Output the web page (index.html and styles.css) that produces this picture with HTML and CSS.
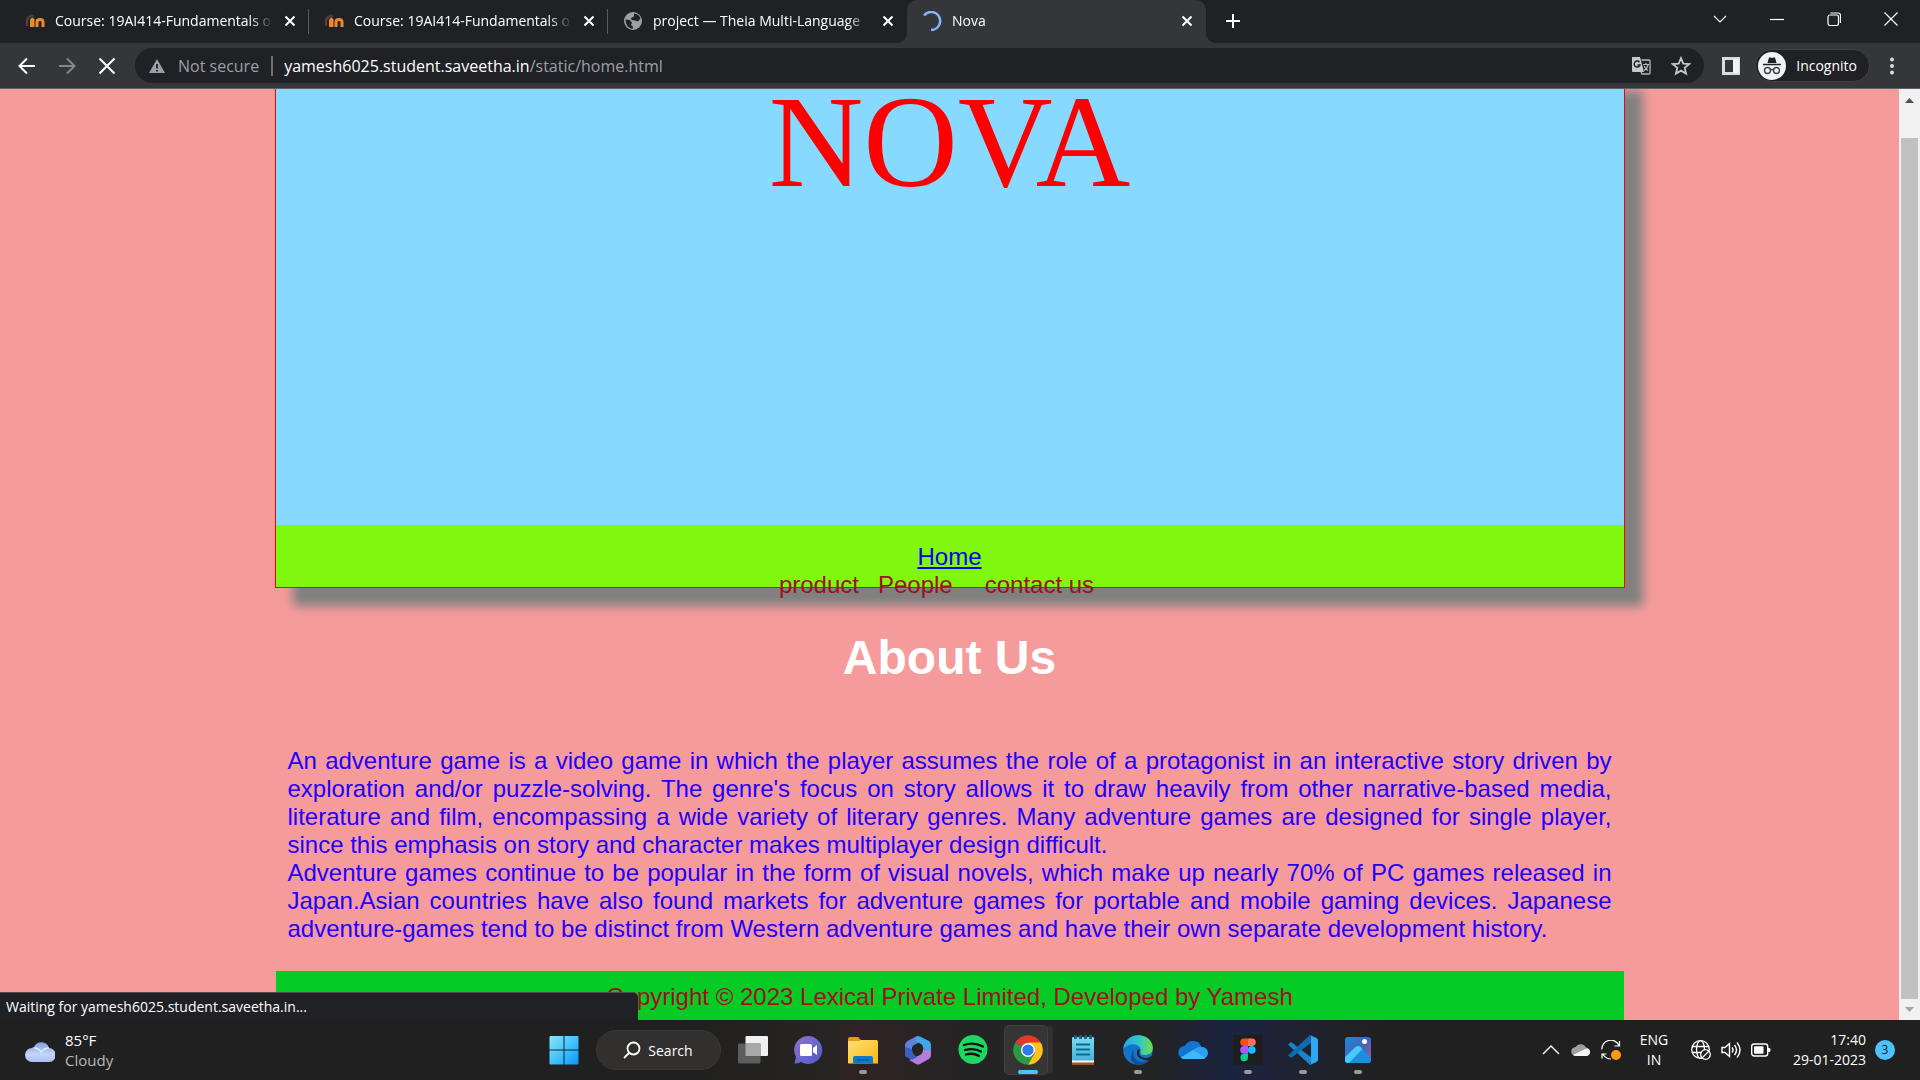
FILE: index.html
```html
<!DOCTYPE html>
<html lang="en">
<head>
<meta charset="utf-8">
<title>Nova</title>
<link rel="stylesheet" href="styles.css">
</head>
<body>
<header class="browser">
  <div class="tabstrip">
    <div class="tab">
      <svg class="favicon" viewBox="0 0 20 20"><path d="M2 15V9.500q0-2.500 2.500-2.500" fill="none" stroke="#5b4334" stroke-width="2"/><path d="M1 6l6-3 3 2-5 2z" fill="#3f3f41"/><path d="M6.500 16V9.500M6.500 10q0-2 2-2M12 16v-5q0-2.500 3-2.500t3 2.500v5M8 8v8" fill="none" stroke="#ef8a2b" stroke-width="3"/></svg>
      <a class="tab-title" href="#">Course: 19AI414-Fundamentals o</a>
      <button class="tab-close" aria-label="Close tab"><svg viewBox="0 0 12 12"><path d="M1.500 1.500l9 9M10.500 1.500l-9 9"/></svg></button>
    </div>
    <div class="tab">
      <svg class="favicon" viewBox="0 0 20 20"><path d="M2 15V9.500q0-2.500 2.500-2.500" fill="none" stroke="#5b4334" stroke-width="2"/><path d="M1 6l6-3 3 2-5 2z" fill="#3f3f41"/><path d="M6.500 16V9.500M6.500 10q0-2 2-2M12 16v-5q0-2.500 3-2.500t3 2.500v5M8 8v8" fill="none" stroke="#ef8a2b" stroke-width="3"/></svg>
      <a class="tab-title" href="#">Course: 19AI414-Fundamentals o</a>
      <button class="tab-close" aria-label="Close tab"><svg viewBox="0 0 12 12"><path d="M1.500 1.500l9 9M10.500 1.500l-9 9"/></svg></button>
    </div>
    <div class="tab tab-last">
      <svg class="favicon" viewBox="0 0 20 20"><circle cx="10" cy="10" r="9" fill="#9aa0a6"/><path d="M2.500 8.500l4 .5 2.500 2.500-1 2.500 2 1.500-.5 2.500q-7-1.500-7-9.500zM11 2.500q5 .5 6.500 5l-2.500 3-3-1-3.500-.5L8 7l3-1.500z" fill="#202124"/></svg>
      <a class="tab-title" href="#">project — Theia Multi-Language</a>
      <button class="tab-close" aria-label="Close tab"><svg viewBox="0 0 12 12"><path d="M1.500 1.500l9 9M10.500 1.500l-9 9"/></svg></button>
    </div>
    <div class="tab tab-active">
      <svg class="favicon" viewBox="0 0 20 20"><path d="M2 4.500A9 9 0 1 1 9 19" fill="none" stroke="#8ab4f8" stroke-width="2.500"/></svg>
      <a class="tab-title" href="#">Nova</a>
      <button class="tab-close" aria-label="Close tab"><svg viewBox="0 0 12 12"><path d="M1.500 1.500l9 9M10.500 1.500l-9 9"/></svg></button>
    </div>
    <button class="new-tab" aria-label="New tab"><svg viewBox="0 0 16 16"><path d="M8 1v14M1 8h14"/></svg></button>
    <div class="window-controls">
      <button aria-label="Search tabs"><svg viewBox="0 0 14 14"><path d="M1 4l6 6 6-6"/></svg></button>
      <button aria-label="Minimise"><svg viewBox="0 0 14 14"><path d="M0 7.500h14"/></svg></button>
      <button aria-label="Restore"><svg viewBox="0 0 14 14"><rect x="1" y="3" width="10.500" height="10.500" rx="2"/><path d="M3.500 1H11q2.500 0 2.500 2.500V11"/></svg></button>
      <button aria-label="Close"><svg viewBox="0 0 14 14"><path d="M.5.5l13 13M13.500.5l-13 13"/></svg></button>
    </div>
  </div>
  <div class="toolbar">
    <button class="tool" aria-label="Back"><svg viewBox="0 0 20 20"><path d="M18 10H3M10 2.500L2.500 10l7.500 7.500"/></svg></button>
    <button class="tool tool-off" aria-label="Forward"><svg viewBox="0 0 20 20"><path d="M2 10h15M10 2.500l7.500 7.500-7.500 7.500"/></svg></button>
    <button class="tool" aria-label="Stop"><svg viewBox="0 0 20 20"><path d="M2.500 2.500l15 15M17.500 2.500l-15 15"/></svg></button>
    <div class="omnibox">
      <svg class="warn" viewBox="0 0 16 16"><path d="M8 1l8 14H0z" fill="#9aa0a6"/><path d="M8 6v4.500M8 12v1.500" stroke="#202124" stroke-width="1.800"/></svg>
      <span class="security">Not secure</span>
      <span class="url"><b>yamesh6025.student.saveetha.in</b>/static/home.html</span>
      <button class="omni-button" aria-label="Translate"><svg viewBox="0 0 20 20"><path d="M1 1h8l4 15H2q-1 0-1-1z" fill="#c4c7cb"/><path d="M10.500 4H18q1 0 1 1v12q0 1-1 1h-7l-1-2" fill="none" stroke="#b5b8bc" stroke-width="1.300"/><path d="M8.500 6.200A3 3 0 1 0 9 9H6.500" fill="none" stroke="#202124" stroke-width="1.500"/><path d="M12 8.500h6M15 7v1.500M17 9q-1 4-4 5.500M13 10q1.500 3 4 4.500" fill="none" stroke="#b5b8bc" stroke-width="1.200"/></svg></button>
      <button class="omni-button" aria-label="Bookmark"><svg viewBox="0 0 20 20"><path d="M10 2.200l2.300 5.400 5.900.5-4.500 3.800 1.400 5.700-5.100-3-5.100 3 1.400-5.700L1.800 8.100l5.900-.5z" fill="none" stroke="#c4c7cb" stroke-width="1.800"/></svg></button>
    </div>
    <button class="side-panel" aria-label="Side panel"><svg viewBox="0 0 18 18"><path d="M1.500 1.500h15v15h-15z" fill="none" stroke="#dadce0" stroke-width="3"/><path d="M11 2h6v14h-6z" fill="#f1f3f4"/></svg></button>
    <button class="incognito"><svg viewBox="0 0 28 28"><circle cx="14" cy="14" r="14" fill="#f1f3f4"/><path d="M9.500 11l1.500-5.500h2l1 .7 1-.7h2L18.500 11z" fill="#202124"/><path d="M5 12.500h18" stroke="#202124" stroke-width="1.500"/><circle cx="9.500" cy="18.500" r="3" fill="none" stroke="#3c4043" stroke-width="1.400"/><circle cx="18.500" cy="18.500" r="3" fill="none" stroke="#3c4043" stroke-width="1.400"/><path d="M12.500 18q1.500-1 3 0" fill="none" stroke="#3c4043" stroke-width="1.400"/></svg>Incognito</button>
    <button class="menu" aria-label="Menu"><svg viewBox="0 0 4 18"><circle cx="2" cy="2.500" r="2"/><circle cx="2" cy="9" r="2"/><circle cx="2" cy="15.500" r="2"/></svg></button>
  </div>
</header>

<div class="viewport">
  <main class="page">
    <div class="container">
      <section class="hero">
        <div class="banner">NOVA</div>
        <nav class="nav">
          <a href="#">Home</a>
          <div class="nav-row"><span>product</span><span>People</span><span class="contact">contact us</span></div>
        </nav>
      </section>
      <h1 class="heading">About Us</h1>
      <p class="about">An adventure game is a video game in which the player assumes the role of a protagonist in an interactive story driven by exploration and/or puzzle-solving. The genre's focus on story allows it to draw heavily from other narrative-based media, literature and film, encompassing a wide variety of literary genres. Many adventure games are designed for single player, since this emphasis on story and character makes multiplayer design difficult.<br>Adventure games continue to be popular in the form of visual novels, which make up nearly 70% of PC games released in Japan.Asian countries have also found markets for adventure games for portable and mobile gaming devices. Japanese adventure-games tend to be distinct from Western adventure games and have their own separate development history.</p>
      <footer class="footer">Copyright © 2023 Lexical Private Limited, Developed by Yamesh</footer>
    </div>
  </main>
  <div class="scrollbar">
    <svg class="arrow" viewBox="0 0 21 21"><path d="M6 14h9L10.500 9z" fill="#505050"/></svg>
    <div class="track"><div class="thumb"></div></div>
    <svg class="arrow" viewBox="0 0 21 21"><path d="M6 8h9l-4.500 5z" fill="#a3a3a3"/></svg>
  </div>
  <div class="status">Waiting for yamesh6025.student.saveetha.in...</div>
</div>

<div class="taskbar">
  <svg width="0" height="0" class="defs">
    <defs>
      <linearGradient id="win" x1="0" y1="0" x2="1" y2="1"><stop offset="0" stop-color="#8be4ff"/><stop offset=".5" stop-color="#43c5fd"/><stop offset="1" stop-color="#0a94ff"/></linearGradient>
      <linearGradient id="cloud" x1="0" y1="0" x2="0" y2="1"><stop offset="0" stop-color="#7f9fe0"/><stop offset=".6" stop-color="#c3d5f7"/><stop offset="1" stop-color="#a8c0f0"/></linearGradient>
      <linearGradient id="chat" x1="0" y1="0" x2="1" y2="1"><stop offset="0" stop-color="#9a6fc0"/><stop offset=".5" stop-color="#6a68d0"/><stop offset="1" stop-color="#5558c8"/></linearGradient>
      <linearGradient id="folder" x1="0" y1="0" x2="1" y2="1"><stop offset="0" stop-color="#ffdf7a"/><stop offset="1" stop-color="#fbb90d"/></linearGradient>
      <linearGradient id="note" x1="0" y1="0" x2="0" y2="1"><stop offset="0" stop-color="#7adcf0"/><stop offset="1" stop-color="#45b3dc"/></linearGradient>
      <linearGradient id="edgeTop" x1="0" y1="0" x2="1" y2="0"><stop offset="0" stop-color="#2aa7e8"/><stop offset=".5" stop-color="#2fc5cf"/><stop offset="1" stop-color="#6be04d"/></linearGradient>
      <linearGradient id="photo" x1="0" y1="0" x2="1" y2="1"><stop offset="0" stop-color="#1a86dc"/><stop offset=".5" stop-color="#4068b8"/><stop offset="1" stop-color="#b04c9c"/></linearGradient>
    </defs>
  </svg>
  <button class="weather">
    <svg viewBox="0 0 30 26"><path d="M7 25a7 7 0 0 1 0-14q1-1 2-1a8 8 0 0 1 15 1 7 7 0 0 1-.5 14z" fill="url(#cloud)"/><path d="M9 11q5 0 7 4 3-4 8-4" fill="none" stroke="#dfe9fc" stroke-width="1.500"/></svg>
    <span class="weather-text"><span>85°F</span><span class="sky">Cloudy</span></span>
  </button>
  <div class="apps">
    <button class="app" aria-label="Start"><svg viewBox="0 0 30 30"><path d="M1.500 1h13v13.500h-14V2q0-1 1-1zM15.500 1h13q1 0 1 1v12.500h-14zM.5 15.500h14V29.500h-13q-1 0-1-1zM15.500 15.500h14v13q0 1-1 1h-13z" fill="url(#win)"/></svg></button>
    <button class="search"><svg viewBox="0 0 18 18"><circle cx="10.500" cy="7.500" r="6" fill="none" stroke="#fff" stroke-width="1.800"/><path d="M6.500 11.500L1 17" stroke="#fff" stroke-width="1.800"/></svg>Search</button>
    <button class="app" aria-label="Task view"><svg viewBox="0 0 30 30"><rect x="7.500" y="1" width="22.500" height="20" rx="1" fill="#f0f0f0"/><rect x="0" y="8.500" width="22.500" height="20" rx="1" fill="#5d5d5d"/><path d="M7.500 8.500h15V21h-15z" fill="#a8a8a8"/></svg></button>
    <button class="app" aria-label="Chat"><svg viewBox="0 0 30 30"><path d="M15 1a14 14 0 1 1-7 26q-3 1.500-6.500 1.500L3 22A14 14 0 0 1 15 1z" fill="url(#chat)"/><rect x="7" y="9" width="12" height="12" rx="1.500" fill="#fff"/><path d="M20 13l4-3v10l-4-3z" fill="#fff"/></svg></button>
    <button class="app running" aria-label="File Explorer"><svg viewBox="0 0 30 30"><path d="M0 4q0-2 2-2h8l3 3h14q3 0 3 3v20H0z" fill="#dfa008"/><path d="M0 6h11l2-1h15q2 0 2 2v21.500H1q-1 0-1-1z" fill="url(#folder)"/><path d="M5 28.500V23q0-2 2-2h16q2 0 2 2v5.500z" fill="#0b79cc"/><path d="M9 25h12" stroke="#06508e" stroke-width="1.200"/></svg></button>
    <button class="app" aria-label="Microsoft 365"><svg viewBox="0 0 30 30"><path d="M13 1.500L4.500 6Q2 7.500 2 10v10q0 1 1 1.500l6 3V13q0-2 2-3l6-3z" fill="#5f83dc"/><path d="M13 1.500q2-1 4 0L26 6q2 1.500 2 4v8l-8-4.500V12q0-2-2-3l-5-3z" fill="#40a8ea"/><path d="M28 16v4q0 2.500-2 4l-9 5q-2 1-4 0l-7-4 11-5q3-1.500 3-6z" fill="#b27ddc"/><path d="M2 12v8q0 1 1 1.500L9 25l5-3q-5-3-5-8z" fill="#3a5fc0"/><circle cx="14.500" cy="14.500" r="4.800" fill="#252424"/></svg></button>
    <button class="app" aria-label="Spotify"><svg viewBox="0 0 30 30"><circle cx="15" cy="14.500" r="14.500" fill="#1ed760"/><path d="M6 10q10-3.500 19 1.500M7 15q9-2.500 16 1.500M8 19.500q7-2 13 1.500" fill="none" stroke="#101010" stroke-width="2.300" stroke-linecap="round"/></svg></button>
    <button class="app current" aria-label="Chrome"><svg viewBox="0 0 30 30"><path d="M15 15L2.300 7.500A14.700 14.700 0 0 1 27.700 7.500z" fill="#e03a2d"/><path d="M15 15L2.300 7.500A14.700 14.700 0 0 0 15 29.700l5-8z" fill="#289a48"/><path d="M15 7.500h12.700A14.700 14.700 0 0 1 15 29.700l7-12z" fill="#fcc31e"/><circle cx="15" cy="15" r="7" fill="#fff"/><circle cx="15" cy="15" r="5.600" fill="#2f78ee"/></svg></button>
    <button class="app" aria-label="Notepad"><svg viewBox="0 0 30 30"><rect x="4" y="25" width="22" height="5" fill="#a4551d"/><rect x="4" y="24" width="22" height="3.500" fill="#f5f5f5"/><rect x="4" y="2" width="22" height="23.500" rx="1" fill="url(#note)"/><path d="M8 9.500h14M8 14.500h14M8 19.500h14" stroke="#0b6a90" stroke-width="1.800"/><path d="M7.500 0v4M12.500 0v4M17.500 0v4M22.500 0v4" stroke="#0d6380" stroke-width="2.800"/></svg></button>
    <button class="app running" aria-label="Edge"><svg viewBox="0 0 30 30"><circle cx="15" cy="15" r="14.800" fill="#1474c9"/><path d="M.3 14A14.800 14.800 0 0 1 15 .2c9 0 15 6 14.800 12.800 0 5-4 7-7.800 7q-5 0-4.500-2.500Q19 12 13 9.500 5 8 .3 14z" fill="url(#edgeTop)"/><path d="M11 14q-3 11 8 13 5 .5 8.500-3Q23 30 15 29.800 3 27 11 14z" fill="#104f9a"/><path d="M17 15q-2 5 1 6.500 5 3 10.500-.5l2 1-2 3q-6 1.500-11-1.500t-3-8.500q1-1.500 2.500 0z" fill="#252527"/></svg></button>
    <button class="app" aria-label="OneDrive"><svg viewBox="0 0 30 30"><path d="M7 24a6.500 6.500 0 0 1-.5-13Q10 5.500 15.500 6q6 0 8 6a6 6 0 0 1 .5 12z" fill="#1475d0"/><path d="M3 22.500L15 15q6-4 9-3a6 6 0 0 1 0 12H7q-3 0-4-1.500z" fill="#2aa0f0"/><path d="M3 22.500L15 15l12 7.500q-1 1.500-3 1.500H7q-3 0-4-1.500z" fill="#43b6fa"/></svg></button>
    <button class="app running" aria-label="Figma"><svg viewBox="0 0 30 30"><rect width="30" height="30" rx="2" fill="#1e1e1e"/><path d="M15 3.500h-4a3.800 3.800 0 0 0 0 7.600h4z" fill="#f24e1e"/><path d="M15 3.500h4a3.800 3.800 0 0 1 0 7.600h-4z" fill="#ff7262"/><path d="M15 11.100h-4a3.800 3.800 0 0 0 0 7.600h4z" fill="#a259ff"/><circle cx="18.800" cy="14.900" r="3.800" fill="#1abcfe"/><path d="M15 18.700h-4a3.800 3.800 0 1 0 4 3.800z" fill="#0acf83"/></svg></button>
    <button class="app running" aria-label="Visual Studio Code"><svg viewBox="0 0 30 30"><path d="M0 9.500L3 7l21 16-2 7z" fill="#1b82cc"/><path d="M0 20.500L3 23 24 7l-2-7z" fill="#0f6cb4"/><path d="M22 0l6.500 3q1.500 1 1.500 2v20q0 1-1.500 2L22 30q1-1 1-3V3q0-2-1-3z" fill="#2ea6f2"/></svg></button>
    <button class="app running" aria-label="Photos"><svg viewBox="0 0 30 30"><rect x="2" y="2" width="26" height="26" rx="3" fill="url(#photo)"/><path d="M2 22L12.500 12q2.500-2 5 0L28 22.500V25q0 3-3 3H5q-3 0-3-3z" fill="#1a8fdd"/><path d="M2 22L12.500 12q2.500-2 5 0l2 2L6 28H5q-3 0-3-3z" fill="#46cbf8"/><circle cx="21.500" cy="6.500" r="2.500" fill="#fff"/></svg></button>
  </div>
  <div class="tray">
    <button class="tray-icon" aria-label="Hidden icons"><svg viewBox="0 0 20 20"><path d="M2 14l8-8 8 8" fill="none" stroke="#fff" stroke-width="1.400"/></svg></button>
    <button class="tray-icon" aria-label="OneDrive status"><svg viewBox="0 0 20 20"><path d="M5 16a4.500 4.500 0 0 1-.5-9A6 6 0 0 1 15 7.500 4.500 4.500 0 0 1 15.500 16z" fill="#a0a0a0"/><path d="M2 15l8-4q5-3 7-2.500a4 4 0 0 1-1.500 7.500H5q-2 0-3-1z" fill="#f5f5f5"/></svg></button>
    <button class="tray-icon" aria-label="Updates"><svg viewBox="0 0 20 20"><path d="M.8 9.500A9 9 0 0 1 18 5.500M18.500 1v5h-5M1 18.500V14h4.500M2 14.500Q5 19 10 19" fill="none" stroke="#fff" stroke-width="1.200"/><circle cx="15" cy="15" r="5" fill="#ff9a0a"/></svg></button>
    <button class="language"><span>ENG</span><span>IN</span></button>
    <button class="tray-icon" aria-label="Network"><svg viewBox="0 0 20 20"><g fill="none" stroke="#fff" stroke-width="1.300"><circle cx="9.500" cy="9.500" r="8.800"/><ellipse cx="9.500" cy="9.500" rx="4" ry="8.800"/><path d="M1.500 6.500h16M1.500 12.500h9"/></g><circle cx="14.500" cy="14.500" r="4.800" fill="#202020" stroke="#fff" stroke-width="1.300"/><path d="M11 18l7-7" stroke="#fff" stroke-width="1.300"/></svg></button>
    <button class="tray-icon" aria-label="Volume"><svg viewBox="0 0 20 20"><path d="M1 7.500h3l4.500-4v13l-4.500-4H1z" fill="none" stroke="#fff" stroke-width="1.400"/><path d="M11 7.500q2 2.500 0 5M13.500 5q4 5 0 10M16 2.500q6 7.500 0 15" fill="none" stroke="#fff" stroke-width="1.400"/></svg></button>
    <button class="tray-icon" aria-label="Battery"><svg viewBox="0 0 20 20"><rect x=".7" y="4" width="16" height="12" rx="2.500" fill="none" stroke="#fff" stroke-width="1.400"/><rect x="3" y="6.300" width="9.500" height="7.400" rx="1" fill="#fff"/><path d="M17 8h1.500q1 0 1 2t-1 2H17z" fill="#fff"/></svg></button>
    <button class="clock"><span>17:40</span><span>29-01-2023</span></button>
    <span class="badge">3</span>
  </div>
</div>
</body>
</html>
```
FILE: styles.css
```css
* { box-sizing: border-box; }

body {
  margin: 0;
  height: 100vh;
  display: flex;
  flex-direction: column;
  overflow: hidden;
  font-family: "Open Sans", "Noto Sans", sans-serif;
  font-size: 14px;
  color: #fff;
}

button {
  display: flex;
  align-items: center;
  justify-content: center;
  margin: 0;
  padding: 0;
  border: 0;
  background: none;
  color: inherit;
  font: inherit;
}

svg { display: block; flex: none; }

/* Browser frame */
.browser { flex: none; border-bottom: 1px solid #5f6063; background: #35363a; }

.tabstrip {
  display: flex;
  height: 43px;
  padding-left: 10px;
  background: #202124;
}

.tab {
  position: relative;
  display: flex;
  align-items: center;
  flex: 0 1 299px;
  min-width: 0;
  padding: 0 11px 2px 15px;
}

.tab:not(.tab-last):not(.tab-active)::after {
  content: "";
  position: absolute;
  right: 0;
  top: 9px;
  width: 1px;
  height: 25px;
  background: #5a5c60;
}

.tab-active { background: #35363a; border-radius: 10px 10px 0 0; }

.tab-active::before,
.tab-active::after {
  content: "";
  position: absolute;
  bottom: 0;
  width: 10px;
  height: 10px;
}

.tab-active::before { left: -10px; background: radial-gradient(circle at 0 0, #202124 10px, #35363a 10px); }
.tab-active::after { right: -10px; background: radial-gradient(circle at 100% 0, #202124 10px, #35363a 10px); }

.favicon { width: 20px; height: 20px; }

.tab-title {
  flex: 1;
  min-width: 0;
  margin: 0 9px 0 10px;
  white-space: nowrap;
  color: #fff;
  text-decoration: none;
  mask-image: linear-gradient(to right, #000 calc(100% - 24px), transparent);
}

.tab-close svg { width: 12px; height: 12px; margin: 0 2px; stroke: #fff; stroke-width: 2; }
.new-tab { width: 54px; padding-bottom: 2px; }
.new-tab svg { width: 16px; height: 16px; stroke: #fff; stroke-width: 2; }

.window-controls { display: flex; margin-left: auto; padding: 0 1px 6px 0; }
.window-controls button { width: 57px; }
.window-controls svg { width: 14px; height: 14px; fill: none; stroke: #fff; stroke-width: 1.2; }

.toolbar { display: flex; align-items: center; height: 45px; padding: 0 20px 0 7px; }
.tool { width: 40px; height: 40px; }
.tool svg { width: 20px; height: 20px; fill: none; stroke: #fff; stroke-width: 2; }
.tool-off svg { stroke: #85878a; }

.omnibox {
  flex: 1;
  display: flex;
  align-items: center;
  height: 35px;
  margin-left: 8px;
  padding: 0 3px 0 14px;
  border-radius: 18px;
  background: #202124;
  font-size: 16px;
  color: #9aa0a6;
}

.warn { width: 16px; height: 16px; margin-right: 13px; }
.security { padding-right: 12px; border-right: 2px solid #6c6f73; line-height: 20px; }
.url { flex: 1; margin-left: 11px; }
.url b { font-weight: 400; color: #fff; }
.omni-button { width: 40px; height: 32px; }
.omni-button svg { width: 20px; height: 20px; }

.side-panel { margin: 0 15px 0 18px; }
.side-panel svg { width: 18px; height: 18px; }

.incognito {
  gap: 10px;
  height: 33px;
  padding: 0 12px 0 2px;
  border: 1px solid #3f4145;
  border-radius: 17px;
  background: #202124;
}

.incognito svg { width: 28px; height: 28px; }
.menu { margin-left: auto; padding: 0 6px 0 20px; }
.menu svg { width: 4px; height: 18px; fill: #dadce0; }

/* Web page */
.viewport {
  position: relative;
  display: flex;
  flex: 1;
  min-height: 0;
  overflow: hidden;
}

.page {
  flex: 1;
  overflow: hidden;
  background: #f69b9b;
  color: #a00f1e;
  font-family: "Liberation Sans", Arial, sans-serif;
  font-size: 24px;
  line-height: 28px;
}

.container { width: 90%; max-width: 1350px; margin: -16px auto 0; }

.hero {
  border: 1px solid #ff0000;
  box-shadow: 18px 18px 10px #808080;
}

.banner {
  height: 451px;
  background: #87d9ff;
  color: #ff0000;
  font-family: "Liberation Serif", "Times New Roman", serif;
  font-size: 131px;
  line-height: 136px;
  text-align: center;
}

.nav {
  height: 62px;
  padding-top: 18px;
  background: #80f70f;
  text-align: center;
}

.nav a { color: #0000ee; }
.nav-row { position: relative; display: flex; justify-content: center; gap: 19px; padding-right: 26px; }
.contact { margin-left: 13px; }

.heading {
  margin: 42px 0 61px;
  color: #fff;
  font-size: 48px;
  line-height: 56px;
  text-align: center;
}

.about { margin: 0; padding: 0 13px 28px; color: #1e00ff; text-align: justify; }

.footer { margin: 0 1px; padding: 12px 0 20px; background: #05cc25; text-align: center; }

.scrollbar { display: flex; flex-direction: column; width: 21px; background: #f1f1f1; }
.arrow { width: 21px; height: 21px; }
.track { flex: 1; padding: 28px 2px 0; }
.thumb { height: 100%; background: #c1c1c1; }

.status {
  position: absolute;
  left: 0;
  bottom: 0;
  width: 638px;
  height: 28px;
  padding-left: 6px;
  border-top: 1px solid #55474a;
  border-top-right-radius: 5px;
  background: #202124;
  line-height: 27px;
}

/* Taskbar */
.taskbar {
  display: flex;
  flex: none;
  height: 60px;
  background: linear-gradient(to right, #202020 0 36%, #22211f 38%, #272424 43%, #2f2224 45%, #252424 50%, #232323 60%, #1a2340 64%, #20222b 69%, #202020 72%);
}

.defs { position: absolute; }
.weather { flex: 1 0 0; justify-content: flex-start; gap: 10px; padding-left: 25px; font-size: 15px; text-align: left; }
.weather svg { width: 30px; height: 26px; }
.weather-text, .language, .clock { display: flex; flex-direction: column; line-height: 20px; }
.sky { color: #b9b9b9; }

.apps { display: flex; align-items: center; padding-left: 2px; }
.app { position: relative; width: 55px; height: 60px; }
.app svg { position: relative; width: 30px; height: 30px; }

.running::after,
.current::after {
  content: "";
  position: absolute;
  left: 50%;
  bottom: 6px;
  width: 8px;
  height: 4px;
  margin-left: -4px;
  border-radius: 2px;
  background: #9a9a9a;
}

.current::after { width: 20px; margin-left: -10px; background: #4cc2ff; }

.current::before {
  content: "";
  position: absolute;
  inset: 5px 8px 5px 3px;
  border: 1px solid #424242;
  border-radius: 5px;
  background: #353535;
  box-shadow: 6px 0 0 -1px #303030;
}

.search {
  gap: 7px;
  width: 125px;
  height: 40px;
  margin: 0 5px 0 4px;
  border: 1px solid #383837;
  border-radius: 20px;
  background: #31302f;
}

.search svg { width: 18px; height: 18px; }

.tray { display: flex; flex: 1 0 0; align-items: center; justify-content: flex-end; padding-right: 25px; }
.tray-icon { width: 30px; height: 40px; }
.tray-icon svg { width: 20px; height: 20px; }
.language { width: 60px; padding-right: 4px; }
.clock { align-items: flex-end; width: 90px; }

.badge {
  width: 20px;
  height: 20px;
  margin-left: 9px;
  border-radius: 50%;
  background: #4cc2ff;
  color: #10202a;
  font-size: 12px;
  line-height: 20px;
  text-align: center;
}
```
